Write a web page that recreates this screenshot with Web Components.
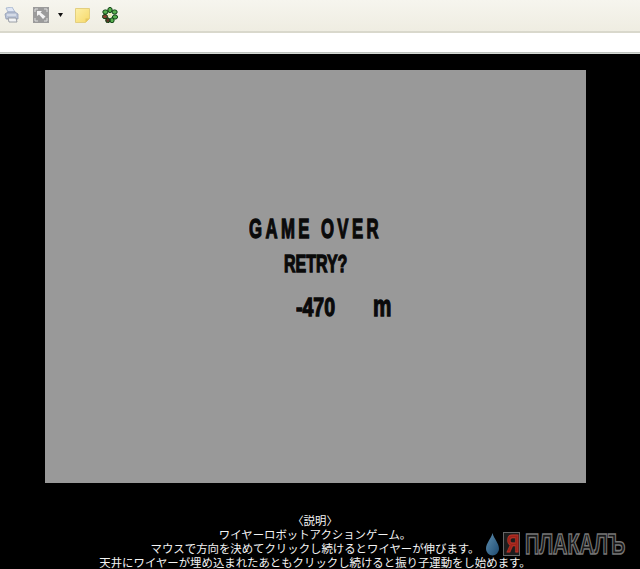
<!DOCTYPE html>
<html><head><meta charset="utf-8">
<style>html,body{margin:0;padding:0;background:#000;overflow:hidden}body{width:640px;height:569px}</style>
</head><body>
<browser-toolbar></browser-toolbar>
<game-page>
  <game-panel>
    <span slot="title">GAME OVER</span>
    <span slot="retry">RETRY?</span>
    <span slot="value">-470</span>
    <span slot="unit">m</span>
  </game-panel>
  <game-notes>
    <div>〈説明〉</div>
    <div>ワイヤーロボットアクションゲーム。</div>
    <div>マウスで方向を決めてクリックし続けるとワイヤーが伸びます。</div>
    <div>天井にワイヤーが埋め込まれたあともクリックし続けると振り子運動をし始めます。</div>
  </game-notes>
  <site-watermark></site-watermark>
</game-page>
<script>
function def(name, html){
  customElements.define(name, class extends HTMLElement{
    constructor(){super();this.attachShadow({mode:'open'}).innerHTML=html;}
  });
}
def('browser-toolbar',`<style>
:host{display:block;height:54px}
.bar{height:31px;background:linear-gradient(#f6f5ee,#efede2);display:flex;align-items:flex-start;padding:7px 0 0 4px;box-sizing:border-box}
.edge{height:2px;background:#d9d8cc}
.addr{height:19px;background:#fff}
.rule{height:2px;background:linear-gradient(#b4b8b4,#dfe3df)}
svg{display:block;flex:none}
</style>
<div class="bar">
<svg width="15" height="16" viewBox="0 0 15 16"><path d="M2 1l6-1 3 5H4z" fill="#dfe6f4" stroke="#9fb0cc" stroke-width=".8"/><path d="M1 7l3-2h7l3 2v5H2z" fill="#b9c3d6" stroke="#8f9bb2" stroke-width=".8"/><path d="M4 11h8l1 4H5z" fill="#f2f3f5" stroke="#858a94" stroke-width=".8"/><path d="M3 8h9" stroke="#eef1f6"/></svg>
<svg width="16" height="16" viewBox="0 0 16 16" style="margin-left:14px"><rect width="16" height="16" fill="#9b9b9b"/><path d="M2 5V2h3M11 2h3v3M14 11v3h-3M5 14H2v-3" fill="none" stroke="#dcdcdc"/><path d="M4 4h5L7.500 5.500l5 4-2.500 2.500-4-4.500L4 9z" fill="#f4f4f4"/></svg>
<svg width="5" height="5" viewBox="0 0 5 5" style="margin:5px 0 0 9px"><path d="M0 1h5L2.500 5z" fill="#111"/></svg>
<svg width="15" height="15" viewBox="0 0 15 15" style="margin:1px 0 0 12px"><defs><linearGradient id="n" x1="0" y1="0" x2="1" y2="1"><stop offset="0" stop-color="#fdf0a8"/><stop offset="1" stop-color="#f6d868"/></linearGradient></defs><path d="M.5 .5h14v10l-4 4H.5z" fill="url(#n)" stroke="#e3cf80"/><path d="M10.500 14.500v-4h4z" fill="#e6c860"/></svg>
<svg width="16" height="16" viewBox="0 0 16 16" style="margin-left:12px"><g fill="#57b04f" stroke="#0b3f10" stroke-width="1"><ellipse cx="8" cy="3" rx="2.200" ry="2.600"/><ellipse cx="12.600" cy="5" rx="2.600" ry="2.100"/><ellipse cx="13" cy="10" rx="2.600" ry="2.100"/><ellipse cx="10" cy="13.300" rx="2.100" ry="2.500"/><ellipse cx="5.800" cy="13.300" rx="2.100" ry="2.500" fill="#5a3a28"/><ellipse cx="3" cy="9.600" rx="2.600" ry="2.100" fill="#8a4030"/><ellipse cx="3.400" cy="5" rx="2.600" ry="2.100"/></g><circle cx="8" cy="8" r="2.100" fill="#e8f0b8"/></svg>
</div>
<div class="edge"></div><div class="addr"></div><div class="rule"></div>`);
def('game-page',`<style>:host{display:block;position:relative;height:515px;background:#000;overflow:hidden;padding-top:16px;box-sizing:border-box}</style><slot></slot>`);
def('game-panel',`<style>
:host{display:flex;flex-direction:column;box-sizing:border-box;width:541px;height:413px;margin-left:45px;background:#999;color:#0a0a0a;
font-family:"Liberation Sans",sans-serif;font-weight:700;padding-top:144px;-webkit-text-stroke:1.300px #0a0a0a}
.row{white-space:nowrap;transform-origin:0 50%}
.t{margin-left:204px;font-size:27px;line-height:30px;letter-spacing:5.500px;transform:scaleX(.62)}
.r{margin-left:239px;margin-top:7px;font-size:23.500px;line-height:26px;transform:scaleX(.68)}
.v{margin-left:251px;margin-top:14px;display:flex;align-items:baseline;line-height:30px}
.n{width:77px;font-size:26px}
.n span,.u span{display:inline-block;transform-origin:0 50%}
.n span{transform:scaleX(.75)}
.u{font-size:30px}
.u span{transform:scaleX(.69)}
</style>
<div class="row t"><slot name="title"></slot></div>
<div class="row r"><slot name="retry"></slot></div>
<div class="v"><div class="n"><span><slot name="value"></slot></span></div><div class="u"><span><slot name="unit"></slot></span></div></div>`);
def('game-notes',`<style>
:host{display:block;width:630px;margin-top:31px;color:#f4f4f4;text-align:center;
font:11.4px/14px "Liberation Sans","Noto Sans CJK JP",sans-serif;white-space:nowrap}
</style><slot></slot>`);
def('site-watermark',`<style>
:host{position:absolute;left:486px;top:478px;width:150px;height:24px;display:flex;align-items:center;font:900 30px/24px "Liberation Sans",sans-serif}
svg{display:block;flex:none;margin-right:5px}
.y{flex:none;width:15px;height:22px;background:#1c1c1c;outline:1px solid #666;margin-right:6px;color:#9c2218;-webkit-text-stroke:1px #b8332a;font-size:24px;line-height:21px;text-align:center}
.y span{display:inline-block;transform:scaleX(.72)}
.p{flex:none;color:#161616;-webkit-text-stroke:1.600px #777;display:inline-block;transform:scaleX(.66);transform-origin:0 50%;white-space:nowrap}
</style>
<svg width="13" height="23" viewBox="0 0 13 23"><defs><linearGradient id="d" x1="0" y1="0" x2="1" y2="1"><stop offset="0" stop-color="#5f8fb0"/><stop offset="1" stop-color="#1d4a70"/></linearGradient></defs><path d="M6.500 0C8 6 13 10 13 16a6.500 6.500 0 0 1-13 0C0 10 5 6 6.500 0z" fill="url(#d)"/></svg>
<span class="y"><span>Я</span></span><span class="p">ПЛАКАЛЪ</span>`);
</script>
</body></html>
